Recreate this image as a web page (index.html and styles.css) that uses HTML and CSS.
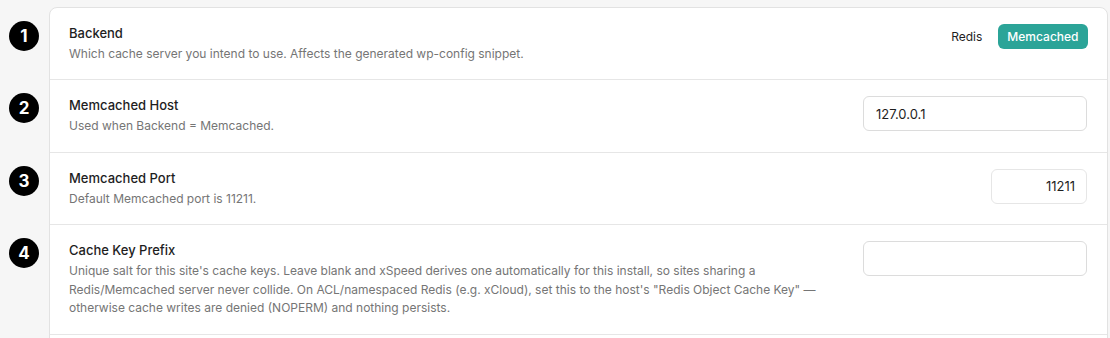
FILE: index.html
```html
<!DOCTYPE html>
<html lang="en">
<head>
<meta charset="utf-8">
<title>Object cache settings</title>
<link rel="stylesheet" href="styles.css">
</head>
<body>
<div class="page">
  <div class="card">
    <div class="row first">
      <span class="badge">1</span>
      <div class="info">
        <div class="title">Backend</div>
        <div class="desc">Which cache server you intend to use. Affects the generated wp-config snippet.</div>
      </div>
      <div class="control seg">
        <button class="seg-btn">Redis</button>
        <button class="seg-btn active">Memcached</button>
      </div>
    </div>
    <div class="row">
      <span class="badge">2</span>
      <div class="info">
        <div class="title">Memcached Host</div>
        <div class="desc">Used when Backend = Memcached.</div>
      </div>
      <div class="control">
        <input class="field wide" type="text" value="127.0.0.1">
      </div>
    </div>
    <div class="row">
      <span class="badge">3</span>
      <div class="info">
        <div class="title">Memcached Port</div>
        <div class="desc">Default Memcached port is 11211.</div>
      </div>
      <div class="control">
        <input class="field narrow" type="text" value="11211">
      </div>
    </div>
    <div class="row">
      <span class="badge">4</span>
      <div class="info">
        <div class="title">Cache Key Prefix</div>
        <div class="desc">Unique salt for this site's cache keys. Leave blank and xSpeed derives one automatically for this install, so sites sharing a Redis/Memcached server never collide. On ACL/namespaced Redis (e.g. xCloud), set this to the host's "Redis Object Cache Key" — otherwise cache writes are denied (NOPERM) and nothing persists.</div>
      </div>
      <div class="control">
        <input class="field wide" type="text" value="">
      </div>
    </div>
    <div class="row spacer"></div>
  </div>
</div>
</body>
</html>
```

FILE: styles.css
```css
* { box-sizing: border-box; }
html, body { margin: 0; padding: 0; }
body {
  background: #f6f6f6;
  font-family: Inter, "Liberation Sans", sans-serif;
  color: #1e1e1e;
  height: 338px;
  overflow: hidden;
}
.page {
  padding: 7px 2px 0 49px;
}
.card {
  background: #fff;
  border: 1px solid #e2e2e2;
  border-radius: 8px;
}
.row {
  position: relative;
  display: flex;
  align-items: flex-start;
  justify-content: space-between;
  gap: 24px;
  padding: 16px 20px 16px 19px;
  border-bottom: 1px solid #e6e6e6;
}
.row.first { padding-bottom: 15.5px; }
.row.spacer { height: 60px; border-bottom: none; }
.badge {
  position: absolute;
  left: -41px;
  top: 13px;
  width: 30px;
  height: 30px;
  border-radius: 50%;
  background: #000;
  color: #fff;
  font-weight: 700;
  font-size: 17px;
  line-height: 30px;
  text-align: center;
}
.info { max-width: 760px; }
.title {
  font-size: 13px;
  font-weight: 500;
  line-height: 18px;
  color: #1e1e1e;
  margin-bottom: 3px;
}
.desc {
  font-size: 12px;
  line-height: 18.5px;
  color: #757575;
}
.control { flex-shrink: 0; display: flex; }
.seg { gap: 6px; margin-right: -1px; }
.seg-btn {
  font-family: inherit;
  font-size: 12px;
  height: 25px;
  padding: 0 9.5px;
  border: none;
  border-radius: 6px;
  background: transparent;
  color: #1e1e1e;
}
.seg-btn.active {
  background: #2ba498;
  color: #fff;
  font-weight: 500;
}
.field {
  font-family: inherit;
  font-size: 13px;
  height: 35px;
  border: 1px solid #dcdcdc;
  border-radius: 6px;
  background: #fff;
  color: #1e1e1e;
  padding: 0 12px;
  outline: none;
}
.field.wide { width: 224px; }
.field.narrow { width: 96px; text-align: right; padding-right: 11px; border-color: #e6e6e6; }
```
